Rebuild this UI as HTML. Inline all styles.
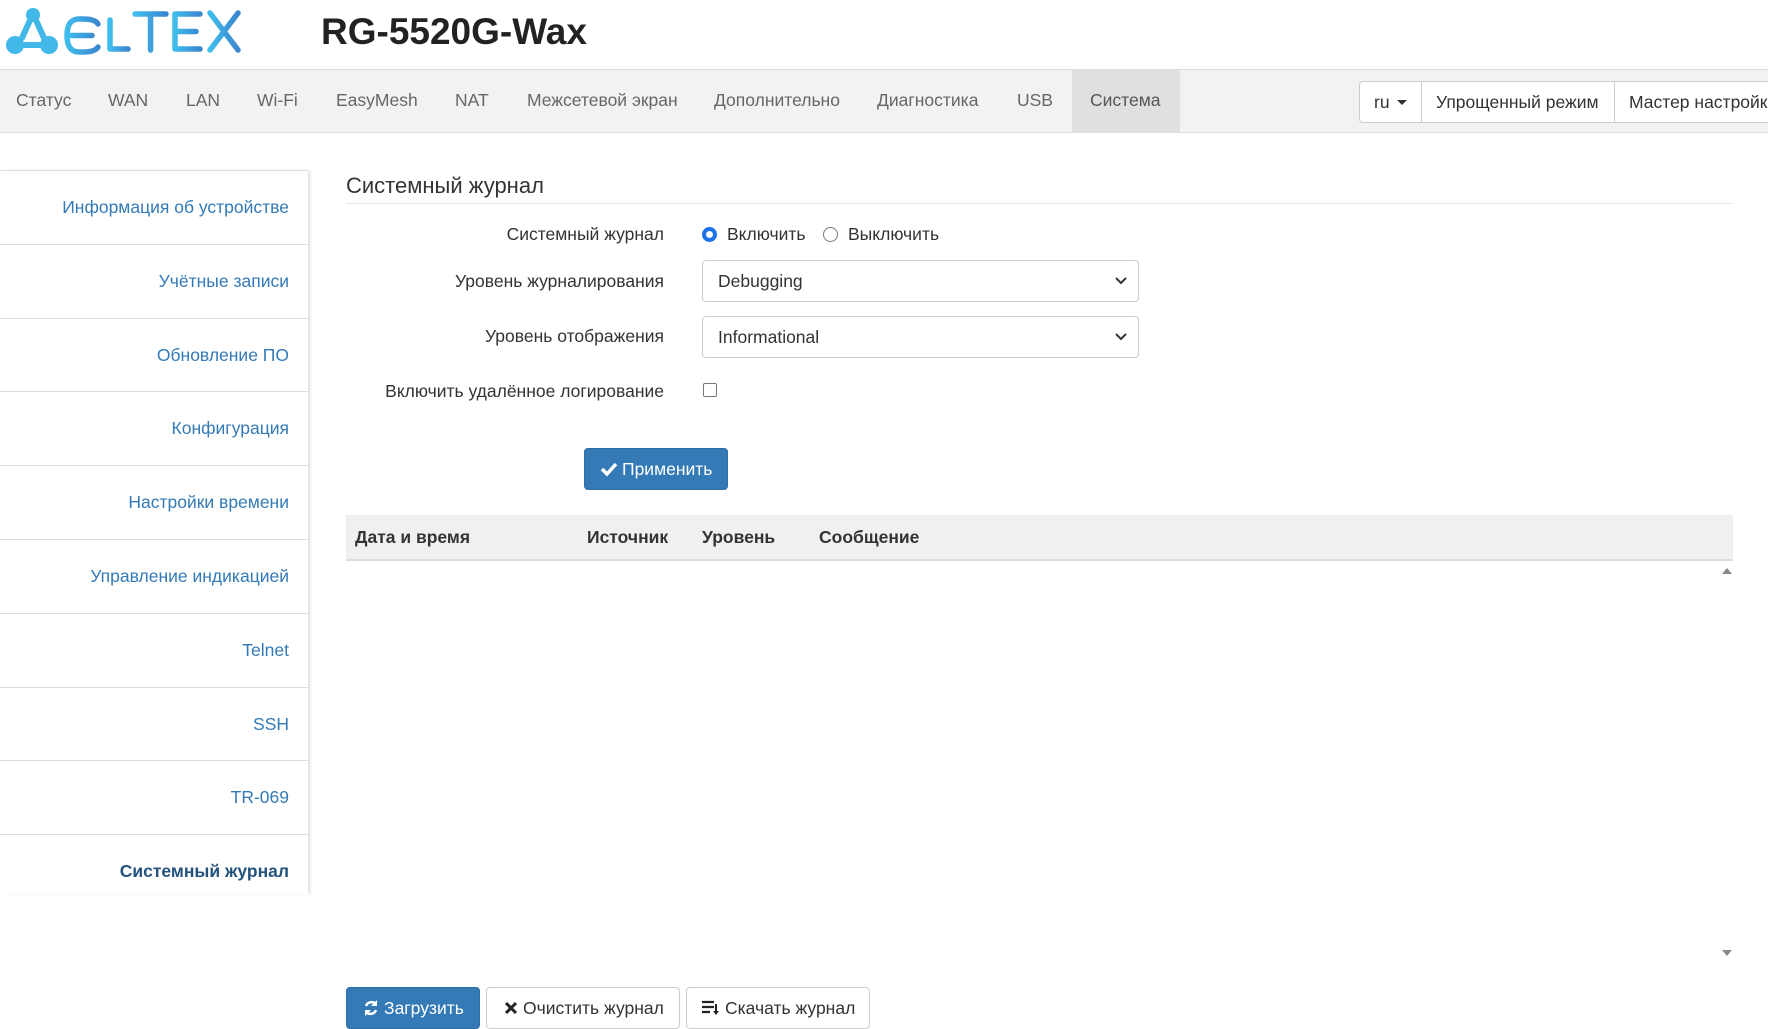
<!DOCTYPE html>
<html><head><meta charset="utf-8"><style>
*{box-sizing:border-box;margin:0;padding:0}
body{width:1768px;height:1026px;overflow:hidden;background:#fff;font-family:"Liberation Sans",Arial,sans-serif;color:#333;position:relative}
.abs{position:absolute}
.nav{left:0;top:69px;width:1768px;height:64px;background:#f2f2f2;border-top:1px solid #ddd;border-bottom:1px solid #ddd}
.nav span{position:absolute;top:20px;font-size:17.5px;color:#666}
.act{left:1072px;top:0;width:108px;height:63px;background:#e0e0e0}
.rb{top:11px;height:42px;border:1px solid #ccc;background:#fff;font-size:17.5px;color:#333;line-height:40px;padding-left:14px}
.side{left:0;top:170px;width:308px}
.side div{height:73.8px;border-top:1px solid #ddd;text-align:right;padding-right:19px;line-height:73px;font-size:17.5px;color:#337ab7}
.lbl{font-size:17.5px;color:#333;text-align:right;right:1104px}
.sel{left:702px;width:437px;height:42px;border:1px solid #ccc;border-radius:4px;font-size:17.5px;line-height:40px;padding-left:15px;color:#333}
.sel svg{position:absolute;right:10px;top:15px}
.btn{top:987px;height:42px;border:1px solid #ccc;border-radius:4px;font-size:17.5px;line-height:40px;background:#fff;color:#333;display:flex;align-items:center;gap:5px}
</style></head><body>
<svg class="abs" style="left:0;top:0" width="250" height="64" viewBox="0 0 250 64">
<defs><linearGradient id="g" x1="0" x2="1"><stop offset="0" stop-color="#3fbdec"/><stop offset="1" stop-color="#3b86cf"/></linearGradient></defs>
<g fill="#41b8e8"><circle cx="33" cy="15" r="7"/><circle cx="15" cy="45" r="9"/><circle cx="49" cy="45" r="9"/></g>
<g fill="none" stroke="#41b8e8" stroke-width="6" stroke-linecap="round"><path d="M31 18 L22 38 M35 18 L44 38 M22 45 L42 45"/></g>
<g fill="none" stroke="url(#g)" stroke-width="5.5" stroke-linecap="round" stroke-linejoin="round">
<path d="M98 24 Q95 19 83 19 L79 19 Q67 19 67 35.5 Q67 52 79 52 L83 52 Q95 52 98 47 M69 35.5 L92 35.5"/>
<path d="M110 20 L110 49 L128 49"/>
<path d="M135 14 L166 14 M150.5 14 L150.5 50"/>
<path d="M200 14 L175 14 L175 49 L200 49 M176 31.5 L196 31.5"/>
<path d="M210 13 L238 50 M238 13 L210 50"/></g></svg>
<div class="abs" style="left:321px;top:11px;font-size:37px;font-weight:bold;color:#222">RG-5520G-Wax</div>
<div class="abs nav">
<div class="abs act"></div>
<span style="left:16px">Статус</span><span style="left:108px">WAN</span><span style="left:186px">LAN</span><span style="left:257px">Wi-Fi</span><span style="left:336px">EasyMesh</span><span style="left:455px">NAT</span><span style="left:527px">Межсетевой экран</span><span style="left:714px">Дополнительно</span><span style="left:877px">Диагностика</span><span style="left:1017px">USB</span><span style="left:1090px;color:#555">Система</span>
<div class="abs rb" style="left:1359px;width:63px;border-radius:4px 0 0 4px">ru <svg width="10" height="6" style="margin-left:3px;vertical-align:middle"><path d="M0 0 L10 0 L5 5Z" fill="#333"/></svg></div>
<div class="abs rb" style="left:1421px;width:194px">Упрощенный режим</div>
<div class="abs rb" style="left:1614px;width:170px;white-space:nowrap;overflow:hidden">Мастер настройки</div>
</div>
<div class="abs side" style="box-shadow:3px 0 3px -1px #ddd;height:725px;overflow:hidden">
<div>Информация об устройстве</div><div>Учётные записи</div><div>Обновление ПО</div><div>Конфигурация</div><div>Настройки времени</div><div>Управление индикацией</div><div>Telnet</div><div>SSH</div><div>TR-069</div><div style="font-weight:bold;color:#23527c">Системный журнал</div>
</div>
<div class="abs" style="left:346px;top:173px;font-size:22px;color:#333">Системный журнал</div>
<div class="abs" style="left:346px;top:203px;width:1387px;border-top:1px solid #e5e5e5"></div>
<div class="abs lbl" style="top:224px">Системный журнал</div>
<div class="abs" style="left:702px;top:227px;width:15px;height:15px;border-radius:50%;border:4px solid #1a73e8"></div>
<div class="abs" style="left:727px;top:224px;font-size:17.5px">Включить</div>
<div class="abs" style="left:823px;top:227px;width:15px;height:15px;border-radius:50%;border:1px solid #777"></div>
<div class="abs" style="left:848px;top:224px;font-size:17.5px">Выключить</div>
<div class="abs lbl" style="top:271px">Уровень журналирования</div>
<div class="abs sel" style="top:260px">Debugging<svg width="14" height="10"><path d="M2 2 L7 7 L12 2" stroke="#333" stroke-width="2" fill="none"/></svg></div>
<div class="abs lbl" style="top:326px">Уровень отображения</div>
<div class="abs sel" style="top:316px">Informational<svg width="14" height="10"><path d="M2 2 L7 7 L12 2" stroke="#333" stroke-width="2" fill="none"/></svg></div>
<div class="abs lbl" style="top:381px">Включить удалённое логирование</div>
<div class="abs" style="left:703px;top:383px;width:14px;height:14px;border:1px solid #777;border-radius:2px"></div>
<div class="abs" style="left:584px;top:448px;width:144px;height:42px;background:#337ab7;border:1px solid #2e6da4;border-radius:4px;color:#fff;font-size:17.5px;line-height:40px;padding-left:15px;display:flex;align-items:center;gap:4px"><svg width="18" height="16" viewBox="0 0 18 16"><path d="M2 8 L7 13 L16 3" stroke="#fff" stroke-width="3.5" fill="none"/></svg>Применить</div>
<div class="abs" style="left:346px;top:515px;width:1387px;height:46px;background:#f0f0f0;border-bottom:2px solid #ddd;font-weight:bold;font-size:17.5px;line-height:44px">
<span class="abs" style="left:9px">Дата и время</span><span class="abs" style="left:241px">Источник</span><span class="abs" style="left:356px">Уровень</span><span class="abs" style="left:473px">Сообщение</span></div>
<svg class="abs" style="left:1722px;top:568px" width="10" height="6"><path d="M0 6 L10 6 L5 0Z" fill="#888"/></svg>
<svg class="abs" style="left:1722px;top:950px" width="10" height="6"><path d="M0 0 L10 0 L5 6Z" fill="#888"/></svg>
<div class="abs btn" style="left:346px;width:134px;background:#337ab7;border-color:#2e6da4;color:#fff;padding-left:16px"><svg width="16" height="18" viewBox="0 0 16 18"><path d="M3 7 A6 6 0 0 1 13 5 M13 11 A6 6 0 0 1 3 13" stroke="#fff" stroke-width="2.5" fill="none"/><path d="M14 1 L14 7 L8 7Z M2 17 L2 11 L8 11Z" fill="#fff"/></svg>Загрузить</div>
<div class="abs btn" style="left:486px;width:194px;padding-left:17px"><svg width="14" height="14"><path d="M2 2 L12 12 M12 2 L2 12" stroke="#222" stroke-width="3"/></svg>Очистить журнал</div>
<div class="abs btn" style="left:686px;width:184px;padding-left:15px"><svg width="18" height="16" viewBox="0 0 18 16"><path d="M0 2 H12 M0 7 H12 M0 12 H8" stroke="#222" stroke-width="2.2"/><path d="M14 4 V13" stroke="#222" stroke-width="2"/><path d="M11 11 L17 11 L14 15Z" fill="#222"/></svg>Скачать журнал</div>
</body></html>
